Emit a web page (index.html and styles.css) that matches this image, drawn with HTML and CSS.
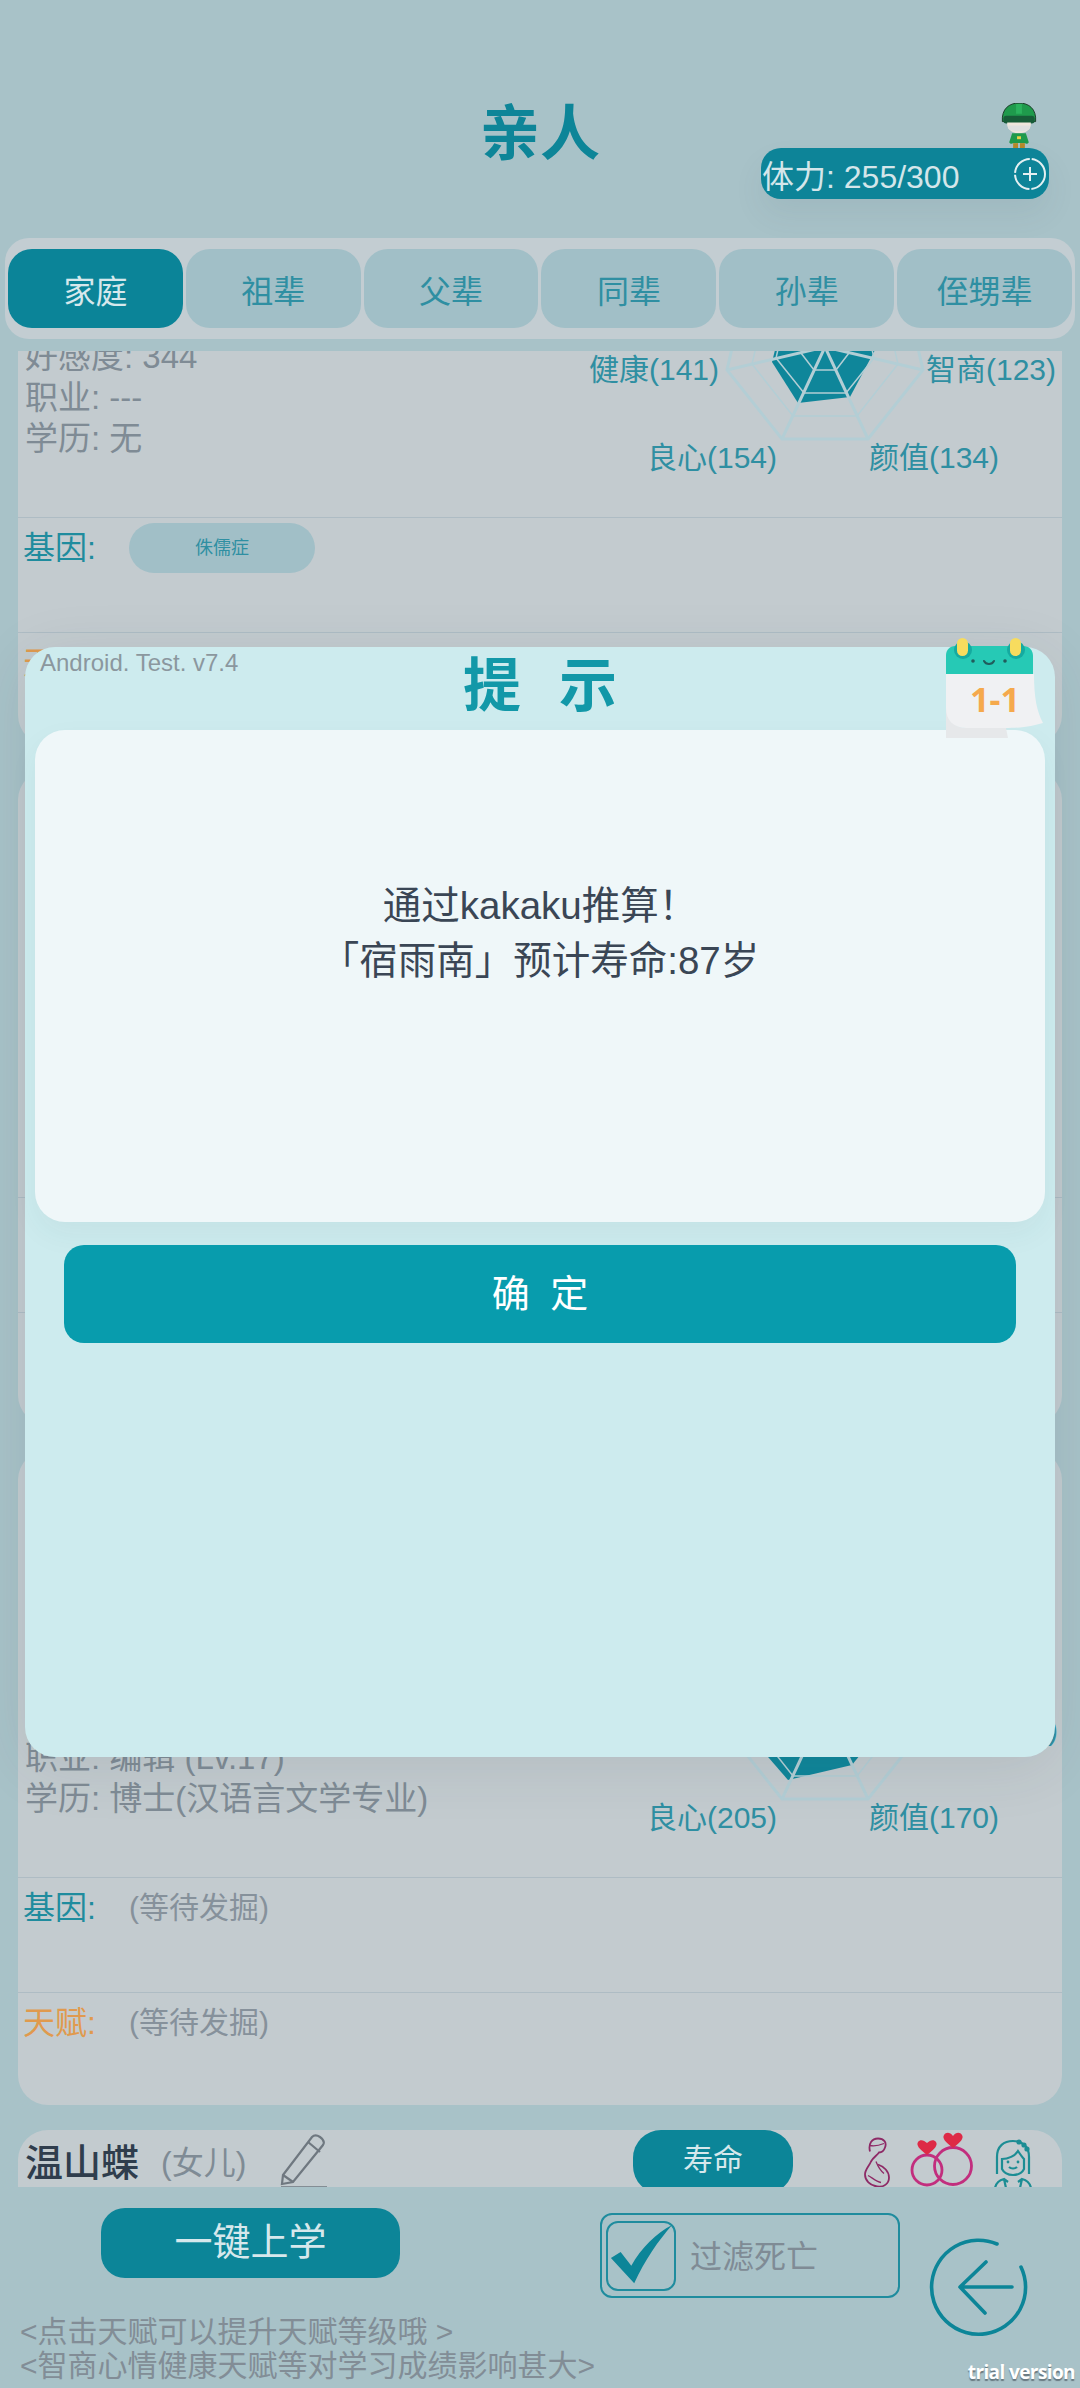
FILE: index.html
```html
<!DOCTYPE html>
<html lang="zh-CN">
<head>
    <meta charset="UTF-8">
    <meta name="viewport" content="width=device-width, initial-scale=1.0">
    <title>亲人</title>
    <link rel="stylesheet" href="styles.css">
</head>
<body>
    <div class="page">
        <header class="top">
            <div></div>
            <h1>亲人</h1>
            <div class="stamina-wrap">
                <svg class="sprite" viewBox="0 0 38 46">
                    <path d="M2 19C1 6 9 0 19 0s18 6 17 19z" fill="#1f9a4c" stroke="#1d3b2a" stroke-width="1"/>
                    <path d="M16 1h6v10h-6z" fill="#2bb25d"/>
                    <rect x="3" y="13" width="32" height="8" rx="3" fill="#175c38"/>
                    <path d="M7 20h24c1 6-4 11-12 11S6 26 7 20z" fill="#efe6dc"/>
                    <path d="M8 23h22v3c-4 4-18 4-22 0z" fill="#dfe0e0"/>
                    <path d="M12 31h14l3 9c-1 2-3 2-4 1H13c-1 1-3 1-4-1z" fill="#1f9a4c"/>
                    <rect x="13" y="41" width="5" height="5" fill="#b58a2a"/>
                    <rect x="20" y="41" width="5" height="5" fill="#b58a2a"/>
                    <rect x="17" y="34" width="4" height="3" fill="#e8d24a"/>
                </svg>
                <div class="stamina">
                    <span>体力: 255/300</span>
                    <svg class="plus" viewBox="0 0 34 34">
                        <circle cx="17" cy="17" r="15" fill="none" stroke="#e4f0f2" stroke-width="2" stroke-dasharray="22 2"/>
                        <path d="M17 10v14M10 17h14" stroke="#e4f0f2" stroke-width="2"/>
                    </svg>
                </div>
            </div>
        </header>

        <nav class="tabs">
            <a class="tab active">家庭</a>
            <a class="tab">祖辈</a>
            <a class="tab">父辈</a>
            <a class="tab">同辈</a>
            <a class="tab">孙辈</a>
            <a class="tab">侄甥辈</a>
        </nav>

        <main class="list">
            <div class="list-inner">
                <section class="card">
                    <div class="card-main">
                        <div class="info">
                            <p>好感度: 344</p>
                            <p>职业: ---</p>
                            <p>学历: 无</p>
                        </div>
                        <div class="radar">
                            <svg class="radar-chart" viewBox="0 0 482 427">
                                <polygon class="radar-data" points="192,272 218,313 270,307 295,260 280,210 245,190 205,220"/>
                                <g id="radar-grid" class="radar-grid">
                                    <polygon points="245,155 323,193 343,280 288,349 202,349 147,280 167,193"/>
                                    <polygon class="thin" points="245,180 303,209 318,274 277,326 213,326 172,274 187,209"/>
                                    <polygon class="thin" points="245,206 284,225 294,268 266,303 224,303 196,268 206,225"/>
                                    <polygon class="thin" points="245,231 264,241 269,263 256,280 234,280 221,263 226,241"/>
                                    <path d="M245,257 V155 M245,257 L323,193 M245,257 L343,280 M245,257 L288,349 M245,257 L202,349 M245,257 L147,280 M245,257 L167,193"/>
                                </g>
                            </svg>
                            <span class="stat stat-health">健康(141)</span>
                            <span class="stat stat-iq">智商(123)</span>
                            <span class="stat stat-heart">良心(154)</span>
                            <span class="stat stat-face">颜值(134)</span>
                        </div>
                    </div>
                    <div class="row">
                        <span class="row-label">基因:</span>
                        <span class="chip">侏儒症</span>
                    </div>
                    <div class="row">
                        <span class="row-label talent">天赋:</span>
                        <span class="row-value">(等待发掘)</span>
                    </div>
                </section>

                <section class="card">
                    <div class="card-main"></div>
                    <div class="row"></div>
                    <div class="row"></div>
                </section>

                <section class="card">
                    <div class="card-main">
                        <div class="info">
                            <p>职业: 编辑 (Lv.17)</p>
                            <p>学历: 博士(汉语言文学专业)</p>
                        </div>
                        <div class="radar">
                            <svg class="radar-chart" viewBox="0 0 482 427">
                                <polygon class="radar-data" points="175,292 208,330 272,315 300,280 280,220 220,220"/>
                                <use href="#radar-grid"/>
                            </svg>
                            <span class="stat stat-iq stat-wide">智商(210)</span>
                            <span class="stat stat-heart">良心(205)</span>
                            <span class="stat stat-face">颜值(170)</span>
                        </div>
                    </div>
                    <div class="row">
                        <span class="row-label">基因:</span>
                        <span class="row-value">(等待发掘)</span>
                    </div>
                    <div class="row">
                        <span class="row-label talent">天赋:</span>
                        <span class="row-value">(等待发掘)</span>
                    </div>
                </section>

                <section class="card">
                    <div class="card-head">
                        <span class="name">温山蝶</span>
                        <span class="relation">(女儿)</span>
                        <svg class="pencil" viewBox="0 0 50 54">
                            <path d="M4 41L33 3c2-2 5-2 8 0s5 5 3 8L14 48 3 50z" fill="none" stroke="#6f7880" stroke-width="2.2"/>
                            <path d="M29 8l12 10M4 41l10 7" fill="none" stroke="#6f7880" stroke-width="2.2"/>
                            <path d="M2 53h46" stroke="#6f7880" stroke-width="1.6"/>
                        </svg>
                        <a class="life-btn">寿命</a>
                        <div class="kin-icons">
                            <svg class="icon-preg" viewBox="0 0 28 50">
                                <path d="M8 14C6 6 10 1 16 1c6 0 9 4 7 9-1 3-3 5-6 5-2 3-6 5-8 9-2 5-6 8-6 13 0 6 5 11 12 12 7 1 12-3 12-9 0-6-5-11-11-13" fill="none" stroke="#8e2a66" stroke-width="1.8"/>
                                <path d="M8 8c5 1 9 0 14-2M14 24c2 5 3 8 8 12M6 38c4 2 8 6 13 7" fill="none" stroke="#8e2a66" stroke-width="1.3"/>
                            </svg>
                            <svg class="icon-rings" viewBox="0 0 66 56">
                                <circle cx="17" cy="39" r="15" fill="none" stroke="#c22e7e" stroke-width="2.8"/>
                                <circle cx="43" cy="35" r="18.5" fill="none" stroke="#c22e7e" stroke-width="2.8"/>
                                <path d="M17 24C9 18 6 14 8 11c2-3 6-2 9 1 3-3 7-4 9-1 2 3-1 7-9 13z" fill="#de2a46"/>
                                <path d="M43 17C35 11 32 7 34 4c2-3 6-3 9 1 3-4 7-4 9-1 2 3-1 7-9 13z" fill="#de2a46"/>
                            </svg>
                            <svg class="icon-girl" viewBox="0 0 38 50">
                                <path d="M3 36V19C3 8 10 3 19 3s16 5 16 16v17" fill="none" stroke="#1c8d94" stroke-width="2.2"/>
                                <path d="M8 31V21c6 0 13-3 16-8 2 3 4 6 6 8v10c-2 4-6 6-11 6s-9-2-11-6z" fill="none" stroke="#1c8d94" stroke-width="2.2"/>
                                <path d="M15 29c2 2 6 2 8 0" fill="none" stroke="#1c8d94" stroke-width="2.2"/>
                                <circle cx="14" cy="24" r="1.4" fill="#1c8d94"/>
                                <circle cx="24" cy="24" r="1.4" fill="#1c8d94"/>
                                <path d="M1 50c1-5 5-8 9-9l4 3M37 50c-1-5-5-8-9-9l-4 3M10 41l2 9M28 41l-2 9" fill="none" stroke="#1c8d94" stroke-width="2.2"/>
                                <circle cx="25" cy="4" r="2.6" fill="#1c8d94"/>
                                <circle cx="30" cy="7" r="2.6" fill="#1c8d94"/>
                                <circle cx="33" cy="11" r="2.6" fill="#1c8d94"/>
                            </svg>
                        </div>
                    </div>
                </section>
            </div>
        </main>

        <footer class="bottom">
            <div class="bottom-left">
                <a class="school-btn">一键上学</a>
                <p class="hints">&lt;点击天赋可以提升天赋等级哦 &gt;<br>&lt;智商心情健康天赋等对学习成绩影响甚大&gt;</p>
            </div>
            <label class="filter">
                <span class="checkbox">
                    <svg viewBox="0 0 68 68">
                        <path d="M3 36l10-6 11 14C34 26 50 10 66 2 52 18 38 38 27 62z" fill="#0c8598"/>
                    </svg>
                </span>
                <span class="filter-text">过滤死亡</span>
            </label>
            <svg class="back" viewBox="0 0 100 100">
                <path d="M68 7A47 47 0 1 0 92 30" fill="none" stroke="#0c8598" stroke-width="3.6" stroke-linecap="round"/>
                <path d="M31 50h52M57 25L31 50l25 26" fill="none" stroke="#0c8598" stroke-width="3.6" stroke-linecap="round" stroke-linejoin="round"/>
            </svg>
        </footer>

        <span class="trial">trial version</span>

        <div class="modal">
            <span class="version">Android. Test. v7.4</span>
            <svg class="calendar" viewBox="0 0 100 100">
                <path d="M1 62c0 18 8 28 20 28h40l2 10H1z" fill="#e6e8ea"/>
                <path d="M1 36h88c0 24 3 38 9 49-10 3-20 5-38 5H22C8 90 1 82 1 70z" fill="#f0f1f3"/>
                <path d="M10 8h68c6 0 10 4 10 10v18H1V17c0-5 4-9 9-9z" fill="#26c9b5"/>
                <circle cx="18" cy="12" r="9" fill="#15aaa0"/>
                <circle cx="71" cy="12" r="9" fill="#15aaa0"/>
                <rect x="12" y="0" width="11" height="18" rx="5.5" fill="#f7dc5e"/>
                <rect x="65" y="0" width="11" height="18" rx="5.5" fill="#f7dc5e"/>
                <circle cx="28" cy="23" r="1.8" fill="#205c5c"/>
                <circle cx="60" cy="23" r="1.8" fill="#205c5c"/>
                <path d="M39 23c2 4 8 4 10 0" fill="none" stroke="#205c5c" stroke-width="2" stroke-linecap="round"/>
                <text class="calendar-date" x="50" y="74" text-anchor="middle">1-1</text>
            </svg>
            <h2>提 示</h2>
            <div class="modal-body">
                <p>通过kakaku推算！</p>
                <p>「宿雨南」预计寿命:87岁</p>
            </div>
            <a class="ok-btn">确 定</a>
        </div>
    </div>
</body>
</html>
```
FILE: styles.css
```css
* {
    box-sizing: border-box;
}
body {
    margin: 0;
    font-family: "Liberation Sans", "Noto Sans CJK SC", sans-serif;
    background-color: #a8c2c8;
}
p, h1, h2 {
    margin: 0;
}
.page {
    position: relative;
    display: flex;
    flex-direction: column;
    width: 1080px;
    height: 2388px;
    overflow: hidden;
    background-color: #a8c2c8;
}

/* header */
.top {
    display: grid;
    grid-template-columns: 1fr auto 1fr;
    height: 238px;
    padding-top: 100px;
}
.top h1 {
    font-size: 60px;
    line-height: 70px;
    font-weight: 700;
    color: #0d8598;
}
.stamina-wrap {
    display: flex;
    flex-direction: column;
    align-items: flex-end;
    padding-right: 31px;
}
.sprite {
    width: 38px;
    height: 45px;
    margin: 3px 11px 0 0;
}
.stamina {
    display: flex;
    align-items: center;
    justify-content: space-between;
    width: 288px;
    height: 51px;
    padding: 0 2px 0 1px;
    border-radius: 20px;
    background-color: #0d8498;
    color: #d4e6ea;
    font-size: 32px;
    box-shadow: 0 16px 30px rgba(60, 90, 100, 0.08);
}
.plus {
    width: 34px;
    height: 34px;
}

/* tabs */
.tabs {
    display: flex;
    gap: 3px;
    height: 101px;
    margin: 0 5px;
    padding: 11px 3px;
    border-radius: 24px;
    background-color: #c3cdd2;
}
.tab {
    display: flex;
    flex: 1;
    align-items: center;
    justify-content: center;
    border-radius: 24px;
    background-color: #a1bfc7;
    color: #2f8fa2;
    font-size: 32px;
}
.tab.active {
    background-color: #0b8498;
    color: #d6e8ec;
}

/* kin list */
.list {
    height: 1836px;
    margin: 12px 18px 0;
    overflow: hidden;
}
.list-inner {
    margin-top: -261px;
}
.card {
    height: 655px;
    margin-bottom: 25px;
    border-radius: 30px;
    background-color: #c3cbcf;
}
.card-main {
    display: flex;
    height: 427px;
}
.info {
    display: flex;
    flex: 1;
    flex-direction: column;
    justify-content: flex-end;
    padding: 0 0 58px 7px;
    color: #7f8b95;
    font-size: 33px;
    line-height: 41px;
}
.radar {
    position: relative;
    width: 482px;
    height: 427px;
}
.radar-chart {
    position: absolute;
    top: 0;
    left: 0;
    width: 482px;
    height: 427px;
}
.radar-data {
    fill: #0f869a;
}
.radar-grid polygon, .radar-grid path {
    fill: none;
    stroke: #b3ced5;
    stroke-width: 3;
}
.radar-grid .thin {
    stroke-width: 1.5;
}
.stat {
    position: absolute;
    color: #2f8fa2;
    font-size: 30px;
    line-height: 40px;
}
.stat-health {
    top: 260px;
    left: 9px;
}
.stat-iq {
    top: 260px;
    right: 6px;
}
.stat-wide {
    right: 4px;
}
.stat-heart {
    top: 348px;
    left: 67px;
}
.stat-face {
    top: 348px;
    left: 289px;
}
.row {
    display: flex;
    align-items: flex-start;
    height: 115px;
    padding: 5px 0 0 5px;
    border-top: 1px solid #aebcc4;
}
.row-label {
    width: 106px;
    color: #1f8c9e;
    font-size: 32px;
    line-height: 50px;
}
.row-label.talent {
    color: #e09a4e;
}
.row-value {
    color: #86919b;
    font-size: 30px;
    line-height: 50px;
}
.chip {
    width: 186px;
    border-radius: 25px;
    background-color: #a1bfc7;
    color: #2f8fa2;
    font-size: 18px;
    line-height: 50px;
    text-align: center;
}
.card-head {
    display: flex;
    align-items: flex-start;
    height: 64px;
    padding-right: 30px;
}
.name {
    margin: 8px 22px 0 7px;
    color: #2f3d4d;
    font-size: 38px;
    line-height: 50px;
    font-weight: 500;
}
.relation {
    margin-top: 8px;
    color: #7f8b95;
    font-size: 32px;
    line-height: 50px;
}
.pencil {
    width: 50px;
    height: 54px;
    margin: 4px 0 0 33px;
}
.life-btn {
    width: 160px;
    height: 64px;
    margin: 0 69px 0 auto;
    border-radius: 28px;
    background-color: #0c8598;
    color: #d6e8ec;
    font-size: 30px;
    line-height: 60px;
    text-align: center;
}
.kin-icons {
    display: flex;
    gap: 18px;
    padding-top: 1px;
}
.icon-preg {
    width: 28px;
    height: 51px;
    margin-top: 6px;
}
.icon-rings {
    width: 66px;
    height: 56px;
    margin-left: 2px;
}
.icon-girl {
    width: 38px;
    height: 50px;
    margin-top: 7px;
}

/* bottom bar */
.bottom {
    display: flex;
    height: 201px;
    align-items: flex-start;
}
.bottom-left {
    width: 600px;
    padding-left: 20px;
}
.school-btn {
    display: block;
    width: 299px;
    height: 70px;
    margin: 21px 0 0 81px;
    border-radius: 24px;
    background-color: #0c8598;
    color: #d6e8ec;
    font-size: 38px;
    line-height: 68px;
    text-align: center;
}
.hints {
    margin-top: 37px;
    color: #828d96;
    font-size: 30px;
    line-height: 34px;
    white-space: nowrap;
}
.filter {
    display: flex;
    align-items: center;
    width: 300px;
    height: 85px;
    margin-top: 26px;
    padding-left: 4px;
    border: 2px solid #1f8c9e;
    border-radius: 12px;
}
.checkbox {
    display: block;
    width: 70px;
    height: 70px;
    border: 2px solid #1f8c9e;
    border-radius: 12px;
}
.checkbox svg {
    display: block;
    width: 66px;
    height: 66px;
}
.filter-text {
    margin: -4px 0 0 14px;
    color: #7f8b95;
    font-size: 32px;
}
.back {
    width: 100px;
    height: 100px;
    margin: 50px 0 0 29px;
}
.trial {
    position: absolute;
    right: 5px;
    bottom: 3px;
    color: #ffffff;
    font-family: "Open Sans", sans-serif;
    font-size: 19px;
    font-weight: 700;
    letter-spacing: -0.6px;
    text-shadow: 0 2px 1px rgba(60, 70, 80, 0.6);
}

/* dialog on top of the page */
.modal {
    position: absolute;
    top: 647px;
    left: 25px;
    width: 1030px;
    height: 1110px;
    padding: 0 10px;
    border-radius: 30px;
    background-color: #cdebee;
    box-shadow: 0 10px 60px rgba(40, 60, 70, 0.1);
}
.version {
    position: absolute;
    top: 2px;
    left: 15px;
    color: #8b979e;
    font-size: 24px;
    line-height: 28px;
}
.calendar {
    position: absolute;
    top: -9px;
    left: 920px;
    width: 100px;
    height: 100px;
}
.calendar-date {
    fill: #f5a94c;
    font-family: "Noto Sans", sans-serif;
    font-size: 34px;
    font-weight: 700;
}
.modal h2 {
    height: 83px;
    color: #1298a8;
    font-size: 58px;
    line-height: 78px;
    font-weight: 700;
    text-align: center;
    word-spacing: 22px;
}
.modal-body {
    height: 492px;
    padding-top: 148px;
    border-radius: 30px;
    background-color: #eff7f9;
    color: #3a4655;
    font-size: 38.5px;
    line-height: 55px;
    text-align: center;
    box-shadow: 0 12px 30px rgba(40, 70, 80, 0.05);
}
.ok-btn {
    display: block;
    height: 98px;
    margin: 23px 29px 0;
    border-radius: 20px;
    background-color: #089cad;
    color: #ffffff;
    font-size: 38px;
    line-height: 98px;
    text-align: center;
    word-spacing: 10px;
}
```
